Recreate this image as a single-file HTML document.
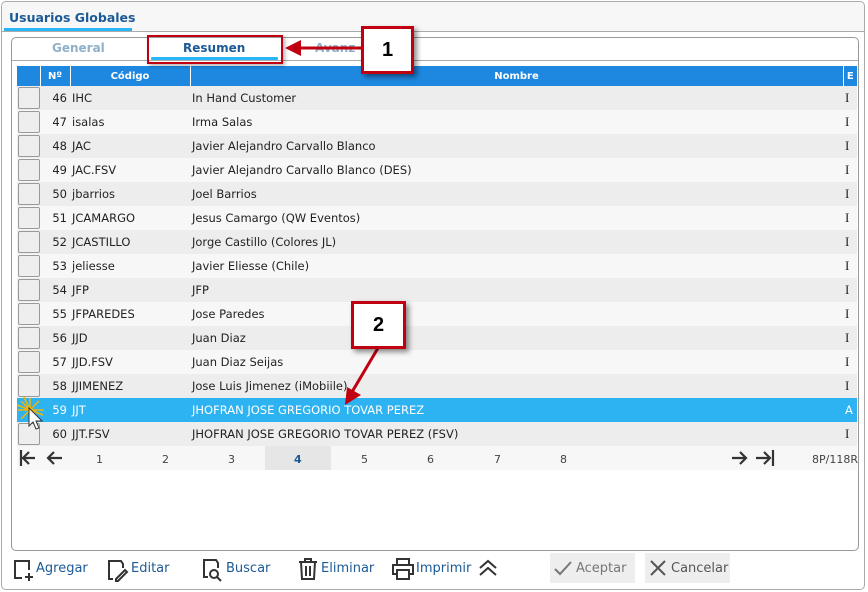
<!DOCTYPE html>
<html><head><meta charset="utf-8"><style>
*{box-sizing:border-box;margin:0;padding:0}
body{width:868px;height:592px;background:#fff;font-family:Tahoma,"DejaVu Sans","Liberation Sans",sans-serif;font-size:11.5px;color:#222;position:relative;overflow:hidden}
.abs{position:absolute}
#outer{left:1px;top:1px;width:864px;height:589px;border:1px solid #aaa;border-radius:5px;background:#fff}
#hdr{left:2px;top:2px;width:862px;height:30px;background:#f7f7f7;border-bottom:1px solid #aaa;border-radius:5px 5px 0 0}
#tabu{left:9px;top:10px;font-weight:bold;font-size:12.5px;color:#1b5a96}
#tabl{left:4px;top:28px;width:128px;height:3px;background:#29b6f6}
#panel{left:11px;top:37px;width:848px;height:514px;border:1px solid #999;border-radius:5px}
#tabsline{left:12px;top:60px;width:846px;height:1px;background:#aaa}
.tab{top:41px;font-weight:bold;font-size:12px;color:#8fb0c8}
table{position:absolute;left:17px;top:66px;border-collapse:collapse;width:840px}
td{height:24px;padding:0 2px;white-space:nowrap;font-size:11.5px}
td.e{font-family:"Liberation Serif",serif;font-size:13px}
th{height:20px;background:#1e88e0;color:#fff;font-size:10px;font-weight:bold;border-right:1px solid #fff}
tr.a td{background:#ededed}tr.b td{background:#f7f7f7}
tr.s td{background:#2db3f2;color:#fff}
.cb{width:23px;padding:0}.cb div{width:22px;height:22px;border:1px solid #999;border-radius:2px;background:#eee;margin-left:1px}
.n{text-align:right;padding-right:3px;width:30px}
#pag{left:17px;top:446px;width:840px;height:24px;background:#f7f7f7}
.pg{top:453px;font-size:11px;color:#444}
.btn{top:561px;font-size:13px;color:#1b5a96}
.box{background:#fff;border:3px solid #c00010;box-shadow:3px 3px 5px rgba(0,0,0,.45);font:bold 20px "Liberation Sans",sans-serif;text-align:center;color:#000}
</style></head><body>
<div class="abs" id="outer"></div>
<div class="abs" id="hdr"></div>
<div class="abs" id="tabu">Usuarios Globales</div>
<div class="abs" id="tabl"></div>
<div class="abs" id="panel"></div>
<div class="abs" id="tabsline"></div>
<div class="abs tab" style="left:52px">General</div>
<div class="abs tab" style="left:183px;color:#1b5a96">Resumen</div>
<div class="abs" style="left:151px;top:57px;width:127px;height:3px;background:#29b6f6;border-radius:1px"></div>
<div class="abs tab" style="left:315px">Avanz</div>
<table>
<tr><th class="cb" style="width:23px"></th><th style="width:30px">Nº</th><th style="width:120px">Código</th><th>Nombre</th><th style="width:14px;border:0">E</th></tr>
<tr class="a"><td class="cb"><div></div></td><td class="n">46</td><td>IHC</td><td>In Hand Customer</td><td class="e">I</td></tr>
<tr class="b"><td class="cb"><div></div></td><td class="n">47</td><td>isalas</td><td>Irma Salas</td><td class="e">I</td></tr>
<tr class="a"><td class="cb"><div></div></td><td class="n">48</td><td>JAC</td><td>Javier Alejandro Carvallo Blanco</td><td class="e">I</td></tr>
<tr class="b"><td class="cb"><div></div></td><td class="n">49</td><td>JAC.FSV</td><td>Javier Alejandro Carvallo Blanco (DES)</td><td class="e">I</td></tr>
<tr class="a"><td class="cb"><div></div></td><td class="n">50</td><td>jbarrios</td><td>Joel Barrios</td><td class="e">I</td></tr>
<tr class="b"><td class="cb"><div></div></td><td class="n">51</td><td>JCAMARGO</td><td>Jesus Camargo (QW Eventos)</td><td class="e">I</td></tr>
<tr class="a"><td class="cb"><div></div></td><td class="n">52</td><td>JCASTILLO</td><td>Jorge Castillo (Colores JL)</td><td class="e">I</td></tr>
<tr class="b"><td class="cb"><div></div></td><td class="n">53</td><td>jeliesse</td><td>Javier Eliesse (Chile)</td><td class="e">I</td></tr>
<tr class="a"><td class="cb"><div></div></td><td class="n">54</td><td>JFP</td><td>JFP</td><td class="e">I</td></tr>
<tr class="b"><td class="cb"><div></div></td><td class="n">55</td><td>JFPAREDES</td><td>Jose Paredes</td><td class="e">I</td></tr>
<tr class="a"><td class="cb"><div></div></td><td class="n">56</td><td>JJD</td><td>Juan Diaz</td><td class="e">I</td></tr>
<tr class="b"><td class="cb"><div></div></td><td class="n">57</td><td>JJD.FSV</td><td>Juan Diaz Seijas</td><td class="e">I</td></tr>
<tr class="a"><td class="cb"><div></div></td><td class="n">58</td><td>JJIMENEZ</td><td>Jose Luis Jimenez (iMobiile)</td><td class="e">I</td></tr>
<tr class="s"><td class="cb"><div style="background:#2db3f2;border-color:#2db3f2"></div></td><td class="n">59</td><td>JJT</td><td>JHOFRAN JOSE GREGORIO TOVAR PEREZ</td><td>A</td></tr>
<tr class="a"><td class="cb"><div></div></td><td class="n">60</td><td>JJT.FSV</td><td>JHOFRAN JOSE GREGORIO TOVAR PEREZ (FSV)</td><td class="e">I</td></tr>
</table>
<div class="abs" id="pag"></div>
<div class="abs" style="left:265px;top:446px;width:66px;height:24px;background:#e6e6e6"></div>
<svg class="abs" style="left:18px;top:449px" width="48" height="18" viewBox="0 0 48 18" fill="none" stroke="#333" stroke-width="2.2"><path d="M3 1v16M17 9H5M11 3L5 9l6 6M44 9H30M36 3l-6 6 6 6"/></svg>
<svg class="abs" style="left:730px;top:449px" width="46" height="18" viewBox="0 0 46 18" fill="none" stroke="#333" stroke-width="2.2"><path d="M2 9h14M10 3l6 6-6 6M26 9h14M34 3l6 6-6 6M43 1v16"/></svg>
<div class="abs pg" style="left:96px">1</div><div class="abs pg" style="left:162px">2</div><div class="abs pg" style="left:228px">3</div>
<div class="abs pg" style="left:294px;color:#1b5a96;font-weight:bold">4</div><div class="abs pg" style="left:361px">5</div><div class="abs pg" style="left:427px">6</div>
<div class="abs pg" style="left:494px">7</div><div class="abs pg" style="left:560px">8</div><div class="abs pg" style="left:812px">8P/118R</div>
<svg class="abs" style="left:16px;top:396px" width="34" height="38" viewBox="0 0 34 38"><g stroke="#f4b400" stroke-width="1.5"><path d="M14 2v26M2 14h26M5 5l18 18M23 5L5 23M8 1l12 26M1 9l26 10"/></g><path d="M13 12v18l4-4 3 7 3-1-3-7h6z" fill="#fff" stroke="#333"/></svg>
<svg class="abs" style="left:13px;top:559px" width="22" height="24" viewBox="0 0 22 24" fill="none" stroke="#333" stroke-width="2"><path d="M9 19H2V2h14v9M16 14v8M12 18h8"/></svg>
<div class="abs btn" style="left:36px">Agregar</div>
<svg class="abs" style="left:107px;top:559px" width="22" height="24" viewBox="0 0 22 24" fill="none" stroke="#333" stroke-width="2"><path d="M6 20H2V2h12l2 3v4M9 20l9-9 2 2-9 9H9z"/></svg>
<div class="abs btn" style="left:131px">Editar</div>
<svg class="abs" style="left:202px;top:558px" width="22" height="24" viewBox="0 0 22 24" fill="none" stroke="#333" stroke-width="2"><path d="M6 19H2V2h12l2 3v5"/><circle cx="12" cy="16" r="4"/><path d="M15 19l4 4"/></svg>
<div class="abs btn" style="left:226px">Buscar</div>
<svg class="abs" style="left:298px;top:558px" width="20" height="22" viewBox="0 0 20 22" fill="none" stroke="#333" stroke-width="2"><path d="M1 4h18M7 4V1h6v3M3 4l1 17h12l1-17M8 8v10M12 8v10"/></svg>
<div class="abs btn" style="left:321px">Eliminar</div>
<svg class="abs" style="left:392px;top:558px" width="22" height="22" viewBox="0 0 22 22" fill="none" stroke="#333" stroke-width="2"><path d="M5 7V1h12v6M5 16H1V7h20v9h-4M5 12h12v9H5z"/></svg>
<div class="abs btn" style="left:416px">Imprimir</div>
<svg class="abs" style="left:478px;top:559px" width="20" height="18" viewBox="0 0 20 18" fill="none" stroke="#333" stroke-width="2"><path d="M2 9l8-7 8 7M2 16l8-7 8 7"/></svg>
<div class="abs" style="left:550px;top:553px;width:85px;height:30px;background:#eee"></div>
<svg class="abs" style="left:553px;top:559px" width="20" height="18" viewBox="0 0 20 18" fill="none" stroke="#777" stroke-width="2"><path d="M2 10l5 5L18 3"/></svg>
<div class="abs btn" style="left:576px;color:#777">Aceptar</div>
<div class="abs" style="left:645px;top:553px;width:85px;height:30px;background:#eee"></div>
<svg class="abs" style="left:649px;top:559px" width="18" height="18" viewBox="0 0 18 18" fill="none" stroke="#555" stroke-width="2"><path d="M2 2l14 14M16 2L2 16"/></svg>
<div class="abs btn" style="left:671px;color:#555">Cancelar</div>
<div class="abs" style="left:147px;top:35px;width:136px;height:29px;border:2px solid #c00010;box-shadow:2px 2px 4px rgba(0,0,0,.3)"></div>
<svg class="abs" style="left:280px;top:30px" width="140" height="400" viewBox="0 0 140 400"><g fill="#c00010" stroke="#c00010" stroke-width="3"><path d="M85 18H18"/><path d="M5 18l16-8v16z" stroke="none"/><path d="M98 318L72 362"/><path d="M65 375l2-18 14 8z" stroke="none"/></g></svg>
<div class="abs box" style="left:361px;top:26px;width:53px;height:48px;line-height:42px">1</div>
<div class="abs box" style="left:351px;top:301px;width:55px;height:48px;line-height:42px">2</div>
</body></html>
